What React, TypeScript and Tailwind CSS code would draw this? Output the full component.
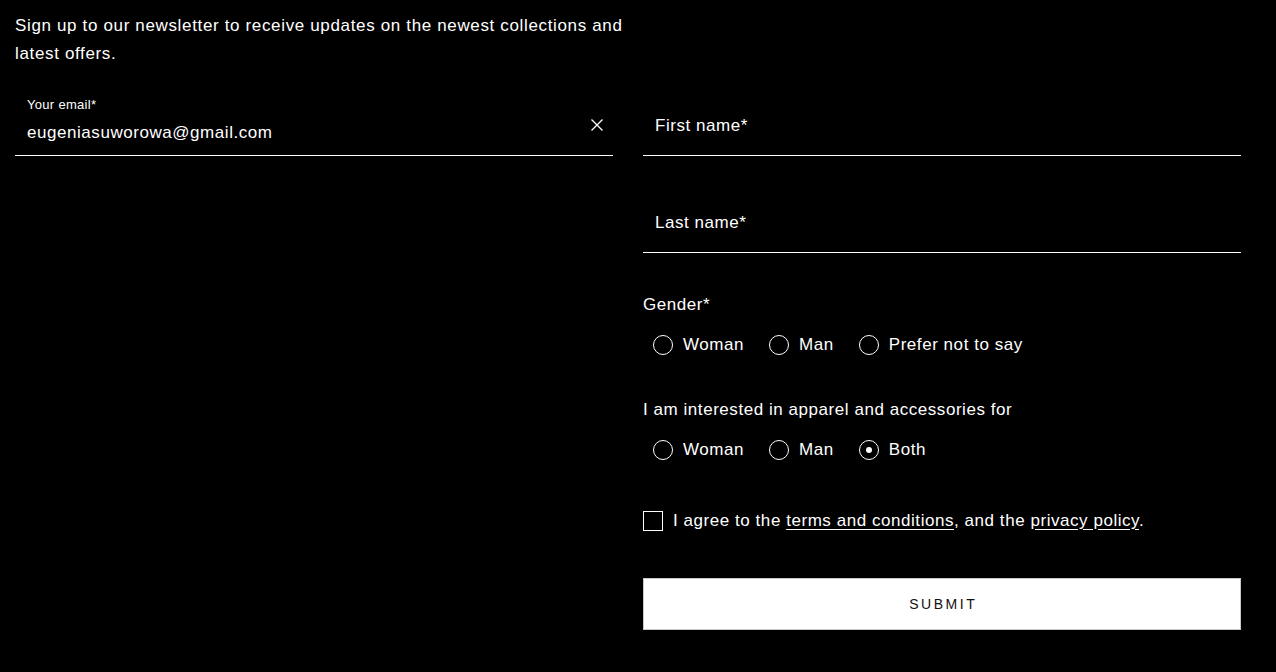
import React, { useState } from 'react';

const font = { fontFamily: '"Liberation Sans", Arial, sans-serif' };

type Opt = { value: string; label: string };

const RadioRow: React.FC<{ options: Opt[]; value: string; onChange: (v: string) => void }> = ({
  options,
  value,
  onChange,
}) => (
  <div className="flex items-center gap-[25px] pl-[10px] h-[24px]">
    {options.map((o) => (
      <button
        key={o.value}
        type="button"
        onClick={() => onChange(o.value)}
        className="flex items-center gap-[10px] text-[17px] leading-[24px] tracking-[0.55px] text-white"
      >
        <span className="w-[20px] h-[20px] rounded-full border border-white flex items-center justify-center">
          {value === o.value && <span className="w-[6px] h-[6px] rounded-full bg-white" />}
        </span>
        {o.label}
      </button>
    ))}
  </div>
);

const TextField: React.FC<{ label: string }> = ({ label }) => (
  <div className="h-[60px] border-b border-white flex items-center px-[12px] pt-[1px]">
    <span className="text-[17px] tracking-[0.55px] text-white">{label}</span>
  </div>
);

export default function App() {
  const [gender, setGender] = useState('');
  const [interest, setInterest] = useState('both');
  const [agree, setAgree] = useState(false);
  const [email, setEmail] = useState('eugeniasuworowa@gmail.com');

  return (
    <div className="min-h-screen bg-black text-white px-[15px] pt-[12px]" style={font}>
      <p className="text-[17px] leading-[28px] tracking-[0.65px] max-w-[630px]">
        Sign up to our newsletter to receive updates on the newest collections and latest offers.
      </p>

      <div className="grid grid-cols-[598px_598px] gap-[30px] mt-[28px]">
        <div>
          <div className="h-[60px] border-b border-white flex items-start px-[12px] pt-[1px]">
            <div className="flex-1 flex flex-col">
              <span className="text-[13px] leading-[16px] tracking-[0.3px]">Your email*</span>
              <input
                value={email}
                onChange={(e) => setEmail(e.target.value)}
                className="bg-transparent outline-none text-[17px] leading-[24px] tracking-[0.55px] mt-[8px] text-white"
              />
            </div>
            <button type="button" onClick={() => setEmail('')} className="mt-[22px] mr-[-2px]">
              <svg width="12" height="12" viewBox="0 0 12 12" fill="none" stroke="white" strokeWidth="1.3">
                <path d="M0.5 0.5l11 11M11.5 0.5l-11 11" />
              </svg>
            </button>
          </div>
        </div>

        <div className="flex flex-col">
          <TextField label="First name*" />
          <div className="mt-[37px]">
            <TextField label="Last name*" />
          </div>

          <div className="mt-[40px] text-[17px] leading-[24px] tracking-[0.55px]">Gender*</div>
          <div className="mt-[16px]">
            <RadioRow
              value={gender}
              onChange={setGender}
              options={[
                { value: 'woman', label: 'Woman' },
                { value: 'man', label: 'Man' },
                { value: 'none', label: 'Prefer not to say' },
              ]}
            />
          </div>

          <div className="mt-[41px] text-[17px] leading-[24px] tracking-[0.55px]">
            I am interested in apparel and accessories for
          </div>
          <div className="mt-[16px]">
            <RadioRow
              value={interest}
              onChange={setInterest}
              options={[
                { value: 'woman', label: 'Woman' },
                { value: 'man', label: 'Man' },
                { value: 'both', label: 'Both' },
              ]}
            />
          </div>

          <label className="mt-[47px] flex items-center gap-[10px] text-[17px] leading-[24px] tracking-[0.55px] cursor-pointer">
            <span
              onClick={() => setAgree(!agree)}
              className="w-[20px] h-[20px] border border-white flex items-center justify-center"
            >
              {agree && <span className="w-[10px] h-[10px] bg-white" />}
            </span>
            <span>
              I agree to the <a className="underline underline-offset-[3px]">terms and conditions</a>, and the{' '}
              <a className="underline underline-offset-[3px]">privacy policy</a>.
            </span>
          </label>

          <button
            type="button"
            className="mt-[45px] h-[52px] bg-white border border-[#c8c8c8] text-[#111] text-[14px] tracking-[0.18em] pl-[0.18em]"
          >
            SUBMIT
          </button>
        </div>
      </div>
    </div>
  );
}
